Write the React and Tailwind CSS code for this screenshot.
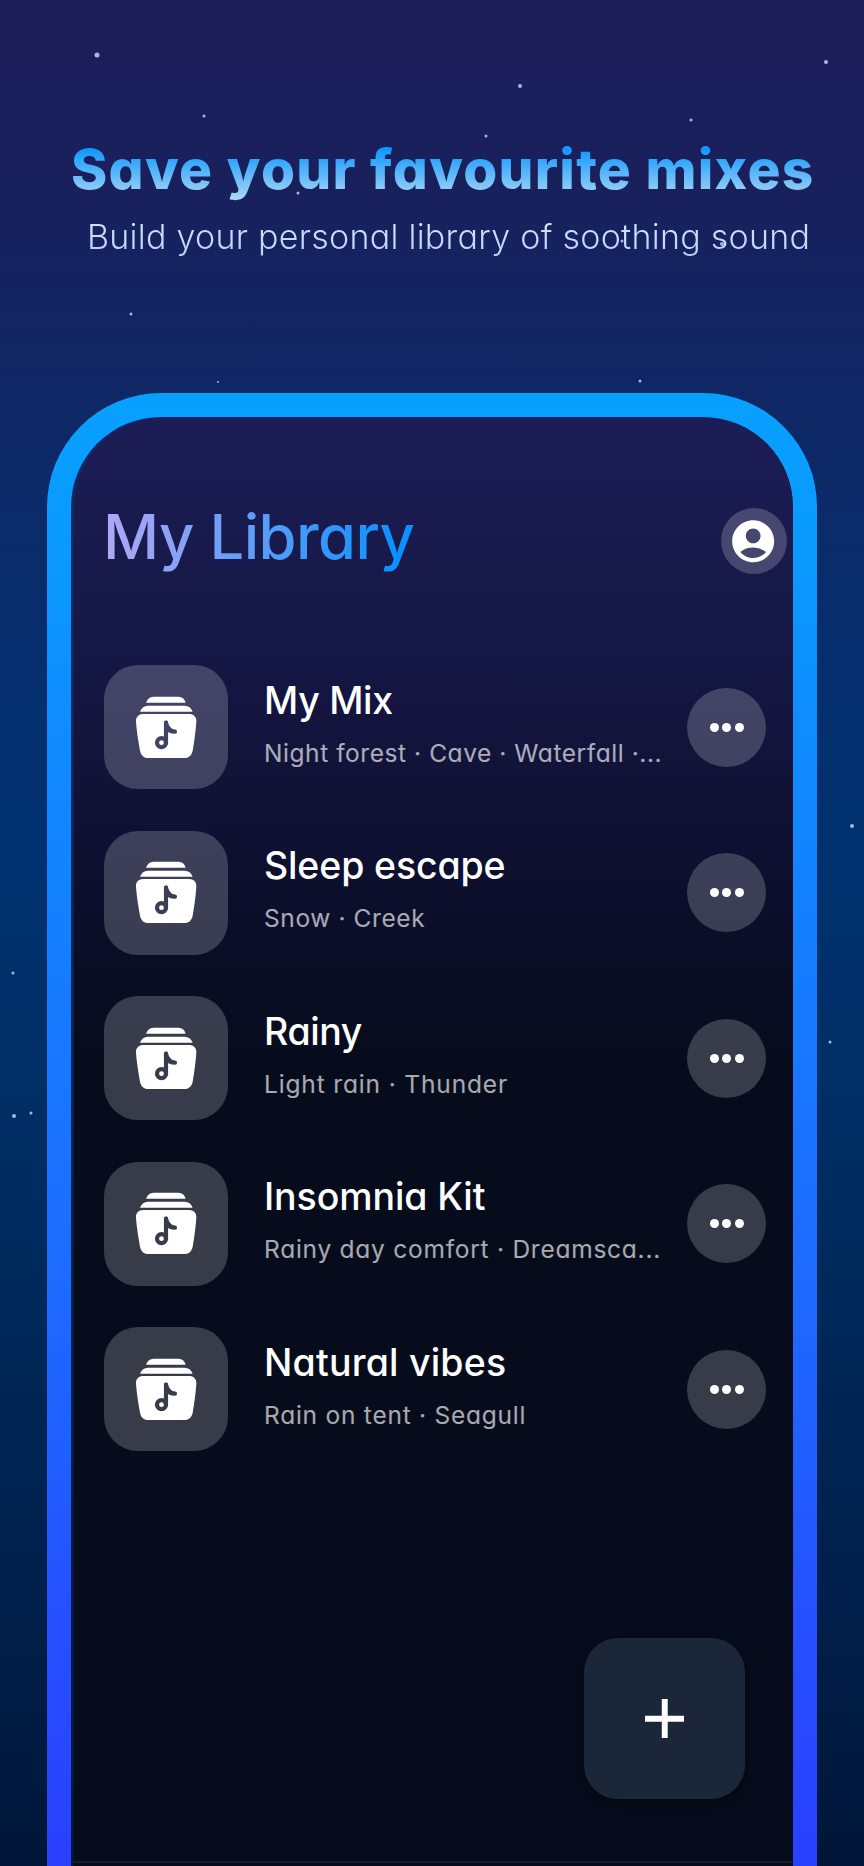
import { MdAccountCircle } from "react-icons/md";

const STARS = [
  { x: 97, y: 55, size: 5 },
  { x: 826, y: 62, size: 4 },
  { x: 520, y: 86, size: 4 },
  { x: 204, y: 116, size: 3 },
  { x: 691, y: 120, size: 3 },
  { x: 486, y: 136, size: 3 },
  { x: 298, y: 193, size: 3 },
  { x: 622, y: 241, size: 3 },
  { x: 722, y: 244, size: 4 },
  { x: 131, y: 314, size: 3 },
  { x: 218, y: 382, size: 2 },
  { x: 640, y: 381, size: 3 },
  { x: 852, y: 826, size: 4 },
  { x: 13, y: 973, size: 3 },
  { x: 830, y: 1042, size: 3 },
  { x: 14, y: 1116, size: 4 },
  { x: 31, y: 1113, size: 3 },
];

const MIXES = [
  {
    title: "My Mix",
    sounds: "Night forest · Cave · Waterfall ·...",
    titleClass: "tracking-[-0.3px]",
    soundsClass: "tracking-[0.56px]",
  },
  {
    title: "Sleep escape",
    sounds: "Snow · Creek",
    titleClass: "tracking-[-0.15px]",
    soundsClass: "tracking-[0.6px]",
  },
  {
    title: "Rainy",
    sounds: "Light rain · Thunder",
    titleClass: "tracking-[-0.4px]",
    soundsClass: "tracking-[0.85px]",
  },
  {
    title: "Insomnia Kit",
    sounds: "Rainy day comfort · Dreamsca...",
    titleClass: "tracking-[-0.1px]",
    soundsClass: "tracking-[0.75px]",
  },
  {
    title: "Natural vibes",
    sounds: "Rain on tent · Seagull",
    titleClass: "tracking-[0.2px]",
    soundsClass: "tracking-[0.76px]",
  },
];

function Stars() {
  return (
    <div className="pointer-events-none absolute inset-0">
      {STARS.map((star) => (
        <span
          key={`${star.x}-${star.y}`}
          className="absolute -translate-x-1/2 -translate-y-1/2 rounded-full bg-[#a9b4e8]"
          style={{ left: star.x, top: star.y, width: star.size, height: star.size }}
        />
      ))}
    </div>
  );
}

function LibraryIcon({ id }) {
  return (
    <svg viewBox="135 137 186 188" className="h-[62.7px] w-[62px]" fill="#fff">
      {/* the note is cut out so the tile shows through */}
      <mask id={id} maskUnits="userSpaceOnUse" x="130" y="180" width="200" height="150">
        <rect x="130" y="180" width="200" height="150" fill="#fff" />
        <g fill="none" stroke="#000" strokeWidth="12.5" strokeLinecap="round">
          <circle cx="214.500" cy="277" r="13.5" />
          <path d="M228 217V277" />
          <path d="M228 217C231 232 242 243 255 244" />
        </g>
        <path d="M226 215L246 236L252 249C242 250 236 247 230 242Z" fill="#000" />
      </mask>
      <path d="M168 157C172 145 180 139 190 139H266C276 139 284 145 287 157Z" />
      <path d="M150 184C154 172 163 166 173 166H284C295 166 304 172 308 184Z" />
      <path
        mask={`url(#${id})`}
        d="M160 191H297C311 191 320 200 319 214C317 243 313 272 308 301C305 315 297 323 283 323H175C161 323 153 315 150 301C145 272 140 243 138 214C137 200 146 191 160 191Z"
      />
    </svg>
  );
}

function MixRow({ mix, index }) {
  return (
    <li className="flex h-[124px] items-center">
      <div className="flex size-[124px] shrink-0 items-center justify-center rounded-[34px] bg-white/20">
        <LibraryIcon id={`note-${index}`} />
      </div>

      <div className="min-w-0 flex-1 pb-2 pl-9">
        <h3
          className={`text-[37.5px] leading-[48px] font-medium whitespace-nowrap text-white ${mix.titleClass}`}
        >
          {mix.title}
        </h3>
        <p
          className={`mt-[11px] text-[24.5px] leading-[34px] whitespace-nowrap text-white/65 ${mix.soundsClass}`}
        >
          {mix.sounds}
        </p>
      </div>

      <button
        type="button"
        aria-label={`More options for ${mix.title}`}
        className="flex size-[79px] shrink-0 items-center justify-center gap-[3.5px] rounded-full bg-white/20"
      >
        <span className="size-[9px] rounded-full bg-white" />
        <span className="size-[9px] rounded-full bg-white" />
        <span className="size-[9px] rounded-full bg-white" />
      </button>
    </li>
  );
}

export default function App() {
  return (
    <div className="relative h-[1866px] w-[864px] overflow-hidden bg-[linear-gradient(180deg,#1d1d59_0px,#19205c_170px,#0f2765_400px,#043070_720px,#00316e_880px,#002d62_1150px,#001f4a_1600px,#001638_1866px)] font-['Inter','Noto_Sans',sans-serif] [font-feature-settings:'cv11']">
      <Stars />

      {/* HEADLINE */}
      <header className="relative h-[393px] pt-[137px]">
        <h1 className="ml-[71px] w-fit bg-[linear-gradient(180deg,#0f98ff_12px,#8ccaf6_52px,#b5dcf8_64px)] bg-clip-text text-[55px] leading-[64px] font-extrabold tracking-[1.25px] whitespace-nowrap text-transparent">
          Save your favourite mixes
        </h1>
        <p className="mt-[14px] ml-[87px] w-fit bg-[linear-gradient(180deg,#dbe6ff,#b4d2fb)] bg-clip-text text-[34px] leading-[44px] font-light tracking-[0.26px] whitespace-nowrap text-transparent">
          Build your personal library of soothing sound
        </p>
      </header>

      {/* PHONE */}
      <div className="relative mx-[47px] h-[1480px] rounded-t-[114px] bg-[linear-gradient(180deg,#08a0ff_0px,#0a9aff_150px,#0f8cff_330px,#1a72ff_757px,#2060ff_1050px,#2551ff_1210px,#2a40ff_1473px)] px-6 pt-6">
        <div className="h-full overflow-hidden rounded-t-[90px] bg-[linear-gradient(180deg,#14286b_0px,#0b2556_500px,#04163a_1449px)] pt-px pl-[3px]">
          <div className="flex h-full flex-col rounded-t-[88px] bg-[linear-gradient(180deg,#1c1d57_0px,#181a4b_130px,#151745_230px,#101236_380px,#0a0e28_510px,#070c1d_640px,#060c1b_900px)]">
            <div className="flex h-[247px] items-start justify-between pt-[90px] pr-[6.500px] pl-[28px]">
              <h2 className="-mt-2 w-fit bg-[linear-gradient(90deg,#b3a7f5,#5a9df8_50%,#0b90ff_95%)] bg-clip-text pl-px text-[61.5px] leading-[74px] font-medium tracking-[-0.6px] whitespace-nowrap text-transparent">
                My Library
              </h2>
              <button
                type="button"
                aria-label="Account"
                className="flex size-[66px] items-center justify-center rounded-full bg-white/20"
              >
                <MdAccountCircle className="size-[50.4px] text-white" />
              </button>
            </div>

            <ul className="flex flex-col gap-[41.5px] pr-[27px] pl-[30px]">
              {MIXES.map((mix, index) => (
                <MixRow key={mix.title} mix={mix} index={index} />
              ))}
            </ul>

            <div className="flex justify-end pt-[187px] pr-[48px]">
              <button
                type="button"
                aria-label="New mix"
                className="flex size-[161px] items-center justify-center rounded-[34px] bg-[#1b2739] shadow-[0_6px_14px_rgba(0,0,0,0.35)]"
              >
                <svg viewBox="0 0 40 40" className="size-[39.5px]" stroke="#fff" strokeWidth="6">
                  <path d="M20 0V40M0 20H40" />
                </svg>
              </button>
            </div>

            <div className="mt-[62px] h-[2px] bg-[#1b1a29]" />
          </div>
        </div>
      </div>
    </div>
  );
}
